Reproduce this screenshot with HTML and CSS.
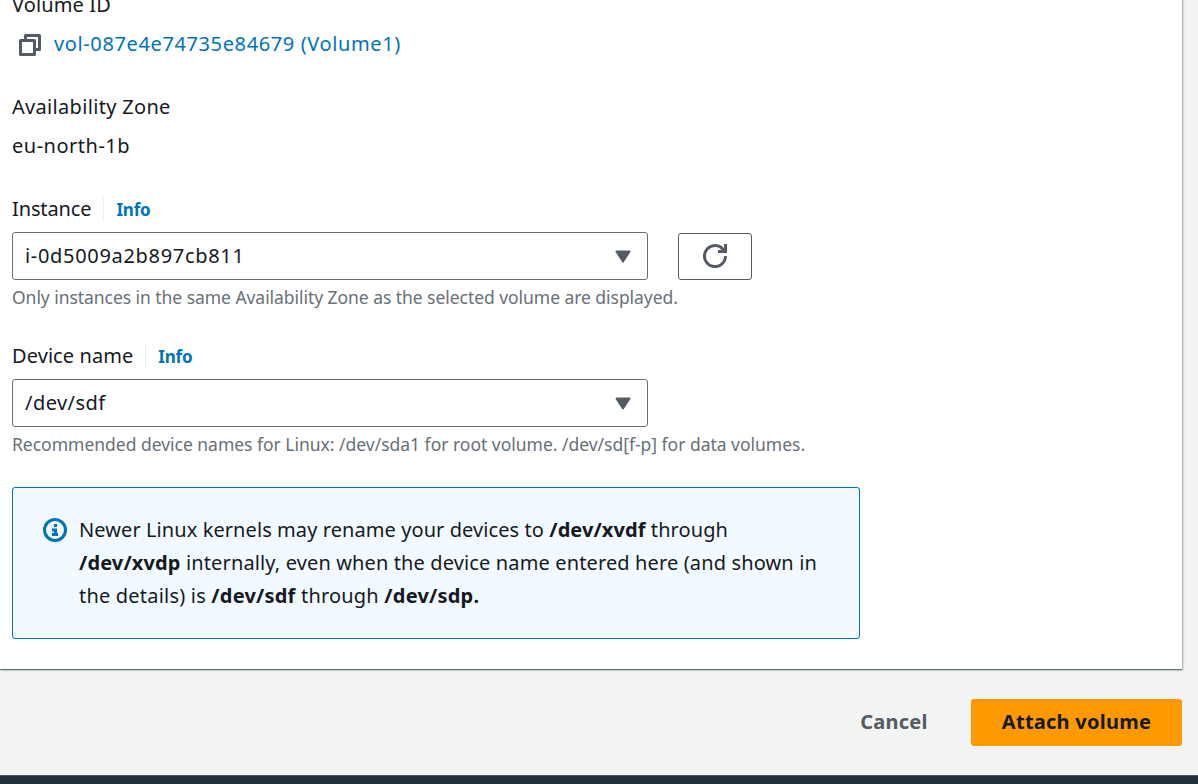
FILE: index.html
```html
<!DOCTYPE html>
<html lang="en">
<head>
<meta charset="utf-8">
<title>Attach volume</title>
<link rel="stylesheet" href="styles.css">
</head>
<body>
<main class="page">
  <section class="card">
    <div class="field">
      <div class="text t-volid">Volume ID</div>
      <div class="copy-row">
        <svg class="copy-icon" width="22" height="22" viewBox="0 0 22 22" fill="none" stroke="#545b64" stroke-width="3" stroke-linejoin="round"><path d="M1.500 6.500h14v14h-14z"/><path d="M6.500 6.500v-5h14v14h-5"/></svg>
        <a class="link"><span class="t-vol">vol-087e4e74735e84679 (Volume1)</span></a>
      </div>
    </div>
    <div class="field zone">
      <div class="text t-az">Availability Zone</div>
      <div class="text t-eu">eu-north-1b</div>
    </div>
    <div class="form-field">
      <div class="label"><span class="text t-inst">Instance</span><a class="info">Info</a></div>
      <div class="controls">
        <div class="select"><span class="t-id">i-0d5009a2b897cb811</span><svg width="16" height="13" viewBox="0 0 16 13"><path d="M1.500 1.500h13L8 11.500z" fill="#545b64" stroke="#545b64" stroke-width="2" stroke-linejoin="round"/></svg></div>
        <button class="refresh" aria-label="Refresh"><svg width="24" height="24" viewBox="0 0 24 24" fill="none" stroke="#545b64" stroke-width="3"><path d="M22.500 12A10.500 10.500 0 1 1 19.200 4.400L21 7"/><path d="M22.500 0v7.500H15"/></svg></button>
      </div>
      <div class="hint t-h1">Only instances in the same Availability Zone as the selected volume are displayed.</div>
    </div>
    <div class="form-field">
      <div class="label"><span class="text t-dev">Device name</span><a class="info">Info</a></div>
      <div class="controls">
        <div class="select"><span class="t-sdf">/dev/sdf</span><svg width="16" height="13" viewBox="0 0 16 13"><path d="M1.500 1.500h13L8 11.500z" fill="#545b64" stroke="#545b64" stroke-width="2" stroke-linejoin="round"/></svg></div>
      </div>
      <div class="hint t-h2">Recommended device names for Linux: /dev/sda1 for root volume. /dev/sd[f-p] for data volumes.</div>
    </div>
    <div class="alert">
      <svg class="alert-icon" width="24" height="24" viewBox="0 0 24 24"><circle cx="12" cy="12" r="10.500" fill="none" stroke="#0073bb" stroke-width="3"/><path d="M11 6h3v3h-3zM9 10.500h5V15h1v3H9v-3h2v-1.500H9z" fill="#0073bb"/></svg>
      <div class="alert-text">
        <div class="t-a1">Newer Linux kernels may rename your devices to <b>/dev/xvdf</b> through</div>
        <div class="t-a2"><b>/dev/xvdp</b> internally, even when the device name entered here (and shown in</div>
        <div class="t-a3">the details) is <b>/dev/sdf</b> through <b>/dev/sdp.</b></div>
      </div>
    </div>
  </section>
  <div class="actions">
    <button class="cancel">Cancel</button>
    <button class="primary">Attach volume</button>
  </div>
  <footer class="footer"></footer>
</main>
</body>
</html>
```
FILE: styles.css
```css
* { box-sizing: border-box; }
body {
  margin: 0;
  background: #f2f3f3;
  color: #16191f;
  font: 20px/33px "Noto Sans", sans-serif;
  overflow: hidden;
}
.page { display: flex; flex-direction: column; height: 784px; overflow: hidden; }
.card {
  flex: none;
  width: 1182px;
  height: 681px;
  margin-top: -12px;
  padding-left: 12px;
  background: #fff;
  box-shadow: 0 1px 1px 0 rgba(0, 28, 36, .5), 1px 1px 2px 0 rgba(0, 28, 36, .3);
  white-space: nowrap;
}
.field { display: flex; flex-direction: column; gap: 6px; margin-bottom: 30px; }
.copy-row { display: flex; align-items: center; padding-left: 7px; }
.copy-icon { flex: none; margin: 2px 13px 0 0; }
.link { color: #0073bb; }
.label { display: flex; align-items: center; height: 33px; margin-bottom: 7px; }
.info {
  margin-left: 12px;
  padding: 2px 0 0 12px;
  border-left: 1px solid #eaeded;
  color: #0073bb;
  font-size: 17px;
  font-weight: 700;
  line-height: 22px;
  letter-spacing: -.2px;
}
.controls { display: flex; align-items: flex-end; gap: 30px; }
.select {
  display: flex;
  align-items: center;
  justify-content: space-between;
  width: 636px;
  height: 48px;
  padding: 0 16px 2px 12px;
  border: 1px solid #687078;
  border-radius: 3px;
}
.select svg { margin-top: 2px; }
.refresh {
  display: flex;
  align-items: center;
  justify-content: center;
  width: 74px;
  height: 47px;
  padding: 0 0 1px;
  border: 1px solid #545b64;
  border-radius: 3px;
  background: #fff;
}
.hint { margin-top: 5px; color: #687078; font-size: 17.5px; line-height: 24px; }
.form-field { margin-bottom: 30px; }
.form-field:nth-last-child(2) { margin-bottom: 31px; }
.alert {
  display: flex;
  gap: 12px;
  width: 848px;
  height: 152px;
  padding: 25px 30px;
  border: 1px solid #0073bb;
  border-radius: 3px;
  background: #f1faff;
}
.alert-icon { flex: none; margin-top: 5px; }
.t-volid { letter-spacing: .12px; }
.t-vol { letter-spacing: .62px; }
.t-az { letter-spacing: .32px; }
.t-eu { letter-spacing: .5px; }
.t-inst { letter-spacing: -.12px; }
.t-dev { letter-spacing: .08px; }
.t-id { letter-spacing: .68px; }
.t-sdf { letter-spacing: .45px; }
.t-h1 { letter-spacing: -.05px; }
.t-h2 { letter-spacing: -.015px; }
.t-a1 { letter-spacing: .08px; }
.t-a2 { letter-spacing: .13px; }
.t-a3 { letter-spacing: .2px; }
.actions {
  display: flex;
  justify-content: flex-end;
  padding: 30px 16px 29px 0;
}
.actions button {
  height: 47px;
  padding: 0 0 2px;
  border: 0;
  border-radius: 3px;
  background: none;
  color: #545b64;
  font: 700 20px/45px "Noto Sans", sans-serif;
  letter-spacing: .25px;
}
.actions .cancel { width: 154px; }
.actions .primary { width: 211px; background: #ff9900; color: #16191f; }
.footer { flex: 1; border-top: 1px solid #4b5460; background: #232f3e; }
```
